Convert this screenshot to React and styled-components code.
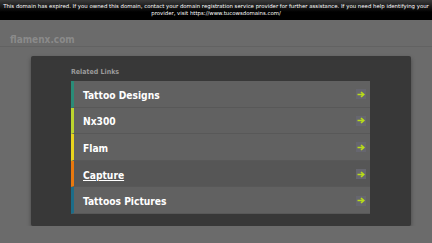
import React from 'react'
import styled, { createGlobalStyle } from 'styled-components'

const Global = createGlobalStyle`
  html, body {
    margin: 0;
    padding: 0;
    background: #6b6b6b;
    font-family: "DejaVu Sans Condensed", "DejaVu Sans", Verdana, sans-serif;
  }
`

const TopBar = styled.div`
  height: 20px;
  background: linear-gradient(#3a3a3a, #000 60%);
  color: #fff;
  font-family: "DejaVu Sans", Verdana, sans-serif;
  font-size: 5.4px;
  line-height: 7px;
  text-align: center;
  padding: 3px 3px 0;
  box-sizing: border-box;
`

const Header = styled.div`
  height: 27px;
  padding: 14px 10px 0;
  box-sizing: border-box;
  border-bottom: 1px solid #626262;
  color: #8a8a8a;
  font-weight: bold;
  font-size: 10px;
  line-height: 12px;
`

const Panel = styled.div`
  margin: 9px 21px 0 31px;
  height: 170px;
  background: #383838;
  border-radius: 2px;
  box-shadow: 0 2px 4px rgba(0, 0, 0, 0.35);
  padding: 12px 41px 0 40px;
  box-sizing: border-box;
`

const Label = styled.div`
  color: #9a9a9a;
  font-weight: bold;
  font-size: 7px;
  line-height: 9px;
  margin-bottom: 4px;
`

const List = styled.ul`
  list-style: none;
  margin: 0;
  padding: 0;
`

const Row = styled.li`
  height: 26.6px;
  box-sizing: border-box;
  display: flex;
  align-items: center;
  justify-content: space-between;
  background: ${p => (p.$active ? '#565656' : '#616161')};
  border-left: 3px solid ${p => p.$color};
  border-bottom: 1px solid #585858;
  padding: 3px 4px 0 9px;
`

const Name = styled.a`
  color: #fff;
  font-weight: bold;
  font-size: 10.2px;
  text-decoration: ${p => (p.$active ? 'underline' : 'none')};
`

const Arrow = styled.span`
  display: flex;
  width: 10px;
  height: 10px;
  margin-top: -2px;
  align-items: center;
  justify-content: center;
  background: #66666f;
`

const links = [
  { name: 'Tattoo Designs', color: '#2a8c78' },
  { name: 'Nx300', color: '#bcd52e' },
  { name: 'Flam', color: '#e8d41e' },
  { name: 'Capture', color: '#e8780e', active: true },
  { name: 'Tattoos Pictures', color: '#1c6c88' },
]

export default () => (
  <>
    <Global />
    <TopBar>
      This domain has expired. If you owned this domain, contact your domain registration service provider for further assistance. If you need help identifying your provider, visit https://www.tucowsdomains.com/
    </TopBar>
    <Header>flamenx.com</Header>
    <Panel>
      <Label>Related Links</Label>
      <List>
        {links.map(l => (
          <Row key={l.name} $color={l.color} $active={l.active}>
            <Name $active={l.active}>{l.name}</Name>
            <Arrow>
              <svg width="8" height="7" viewBox="0 0 8 7">
                <path d="M0.5 3.5H6.5M4 1L6.8 3.5L4 6" stroke="#b8dc18" strokeWidth="1.6" fill="none" />
              </svg>
            </Arrow>
          </Row>
        ))}
      </List>
    </Panel>
  </>
)
